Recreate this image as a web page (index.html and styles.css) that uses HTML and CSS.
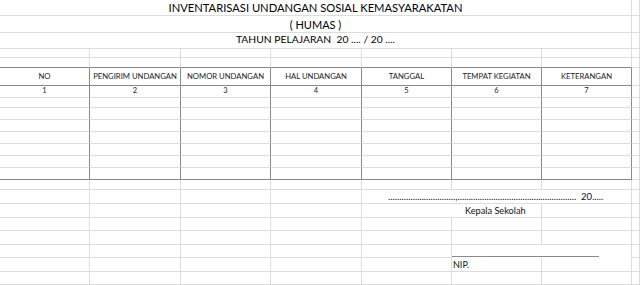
FILE: index.html
```html
<!DOCTYPE html>
<html lang="id">
<head>
<meta charset="utf-8">
<title>Inventarisasi Undangan Sosial Kemasyarakatan</title>
<link rel="stylesheet" href="styles.css">
</head>
<body>
<div class="sheet">
  <div class="row h16"><div class="span7 title t1">INVENTARISASI UNDANGAN SOSIAL KEMASYARAKATAN</div><div></div></div>
  <div class="row h17"><div class="span7 title t2">( HUMAS )</div><div></div></div>
  <div class="row h16"><div class="span7 title t3">TAHUN PELAJARAN&nbsp; 20 .... / 20 ....</div><div></div></div>
  <div class="row h9"><div></div><div></div><div></div><div></div><div></div><div></div><div></div><div></div></div>
  <div class="row h10 edge"><div></div><div></div><div></div><div></div><div></div><div></div><div></div><div></div></div>
  <div class="row h18 tbl edge hd"><div>NO</div><div>PENGIRIM UNDANGAN</div><div>NOMOR UNDANGAN</div><div>HAL UNDANGAN</div><div>TANGGAL</div><div>TEMPAT KEGIATAN</div><div>KETERANGAN</div><div></div></div>
  <div class="row h12 tbl num"><div>1</div><div>2</div><div>3</div><div>4</div><div>5</div><div>6</div><div>7</div><div></div></div>
  <div class="row h10 tbl"><div></div><div></div><div></div><div></div><div></div><div></div><div></div><div></div></div>
  <div class="row h12 tbl"><div></div><div></div><div></div><div></div><div></div><div></div><div></div><div></div></div>
  <div class="row h12 tbl"><div></div><div></div><div></div><div></div><div></div><div></div><div></div><div></div></div>
  <div class="row h12 tbl"><div></div><div></div><div></div><div></div><div></div><div></div><div></div><div></div></div>
  <div class="row h12 tbl"><div></div><div></div><div></div><div></div><div></div><div></div><div></div><div></div></div>
  <div class="row h12 tbl"><div></div><div></div><div></div><div></div><div></div><div></div><div></div><div></div></div>
  <div class="row h12 tbl edge"><div></div><div></div><div></div><div></div><div></div><div></div><div></div><div></div></div>
  <div class="row h10"><div></div><div></div><div></div><div></div><div></div><div></div><div></div><div></div></div>
  <div class="row h14"><div></div><div></div><div></div><div></div><div class="span3 txt dots">..............................,.....................................................  20.....</div><div></div></div>
  <div class="row h14"><div></div><div></div><div></div><div></div><div class="span2 txt kepala">Kepala Sekolah</div><div></div><div></div></div>
  <div class="row h13"><div></div><div></div><div></div><div></div><div></div><div></div><div></div><div></div></div>
  <div class="row h14"><div></div><div></div><div></div><div></div><div></div><div></div><div></div><div></div></div>
  <div class="row h13"><div></div><div></div><div></div><div></div><div></div><div class="span2 sig"><span class="sig-line"></span></div><div></div></div>
  <div class="row h14"><div></div><div></div><div></div><div></div><div></div><div class="txt nip">NIP.</div><div></div><div></div></div>
  <div class="row h13"><div></div><div></div><div></div><div></div><div></div><div></div><div></div><div></div></div>
</div>
</body>
</html>
```

FILE: styles.css
```css
html, body {
  margin: 0;
  padding: 0;
  background: #ffffff;
  overflow: hidden;
}

body {
  font-family: Lato, "Open Sans", sans-serif;
  color: #111;
}

.sheet {
  width: 640px;
}

.row {
  display: grid;
  grid-template-columns: 90px 91px 90px 91px 90px 90px 90px 1fr;
}

.row > div {
  box-sizing: border-box;
  border-right: 1px solid #dcdcdc;
  border-bottom: 1px solid #dcdcdc;
  min-width: 0;
  white-space: nowrap;
}

.h9 { height: 9px; }
.h10 { height: 10px; }
.h12 { height: 12px; }
.h13 { height: 13px; }
.h14 { height: 14px; }
.h16 { height: 16px; }
.h17 { height: 17px; }
.h18 { height: 18px; }

.span7 { grid-column: span 7; }
.span3 { grid-column: span 3; }
.span2 { grid-column: span 2; }

.title {
  display: flex;
  justify-content: center;
  align-items: flex-end;
  line-height: 1;
  color: #000;
}

.t1 { font-size: 11.2px; padding-bottom: 2px; }
.t2 { font-size: 11px; padding-bottom: 2px; }
.t3 { font-size: 10.3px; padding-bottom: 4px; }

/* table borders */
.tbl > div:not(:last-child) {
  border-right-color: #8a8a8a;
}

.edge > div:not(:last-child) {
  border-bottom-color: #8a8a8a;
}

.hd > div,
.num > div {
  display: flex;
  justify-content: center;
  align-items: center;
  line-height: 1;
  color: #222;
}

.hd > div { font-size: 7.7px; padding-top: 1px; }
.num > div { font-size: 7.5px; padding-bottom: 1px; }

.txt {
  display: flex;
  align-items: flex-end;
  line-height: 1;
  font-size: 9px;
  padding-bottom: 2px;
  color: #111;
}

.row > .dots {
  white-space: pre;
  padding-left: 26px;
  font-size: 9.5px;
}

.row > .kepala {
  padding-left: 103px;
  font-size: 9.2px;
}

.row > .nip {
  padding-left: 1px;
}

.row > .sig {
  display: flex;
  align-items: flex-end;
  border-bottom-color: transparent;
}

.sig-line {
  display: block;
  width: 147px;
  height: 1px;
  background: #8a8a8a;
}
```
